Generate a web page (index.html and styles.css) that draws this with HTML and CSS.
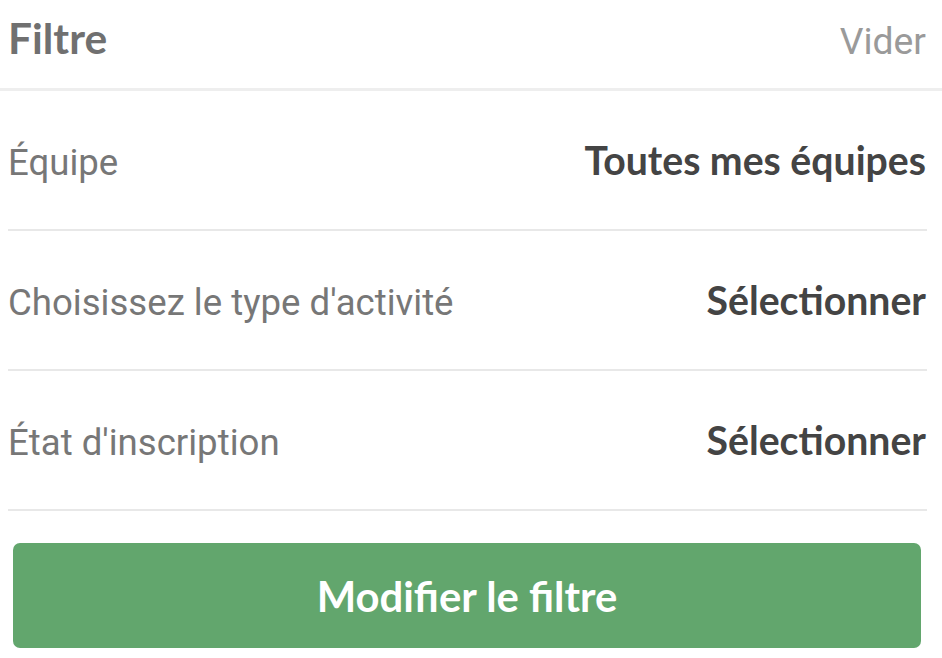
FILE: index.html
```html
<!DOCTYPE html>
<html lang="fr">
<head>
<meta charset="utf-8">
<link rel="stylesheet" href="styles.css">
</head>
<body>
<div class="sheet">
  <header class="header">
    <span class="title">Filtre</span>
    <span class="clear">Vider</span>
  </header>
  <ul class="list">
    <li class="row"><span class="label">Équipe</span><span class="value">Toutes mes équipes</span></li>
    <li class="row"><span class="label">Choisissez le type d'activité</span><span class="value">Sélectionner</span></li>
    <li class="row"><span class="label">État d'inscription</span><span class="value">Sélectionner</span></li>
  </ul>
  <div class="actions">
    <button class="btn">Modifier le filtre</button>
  </div>
</div>
</body>
</html>
```
FILE: styles.css
```css
html, body {
  margin: 0;
  padding: 0;
  background: #ffffff;
}
.sheet {
  width: 942px;
  height: 658px;
  overflow: hidden;
}
.header {
  box-sizing: border-box;
  height: 91px;
  display: flex;
  align-items: baseline;
  justify-content: space-between;
  padding: 12px 16px 0 8px;
  border-bottom: 3px solid #eeeeee;
}
.title {
  font-family: Lato, "Liberation Sans", sans-serif;
  font-weight: 700;
  font-size: 42.5px;
  color: #707070;
}
.clear {
  font-family: Roboto, "Liberation Sans", sans-serif;
  font-size: 37.3px;
  color: #9a9a9a;
}
.list {
  list-style: none;
  margin: 0 15px 0 8px;
  padding: 0;
}
.row {
  box-sizing: border-box;
  height: 140px;
  display: flex;
  align-items: baseline;
  justify-content: space-between;
  padding: 45px 1px 0 0;
  border-bottom: 2px solid #e8e8e8;
}
.label {
  font-family: Roboto, "Liberation Sans", sans-serif;
  font-size: 36.6px;
  color: #777777;
}
.value {
  font-family: Lato, "Liberation Sans", sans-serif;
  font-weight: 700;
  font-size: 39.2px;
  color: #444444;
}
.actions {
  padding: 32px 21px 0 13px;
}
.btn {
  display: block;
  width: 100%;
  height: 105px;
  border: none;
  border-radius: 7px;
  background: #62a66d;
  color: #ffffff;
  font-family: Lato, "Liberation Sans", sans-serif;
  font-weight: 700;
  font-size: 41.8px;
  padding: 0;
}
```
